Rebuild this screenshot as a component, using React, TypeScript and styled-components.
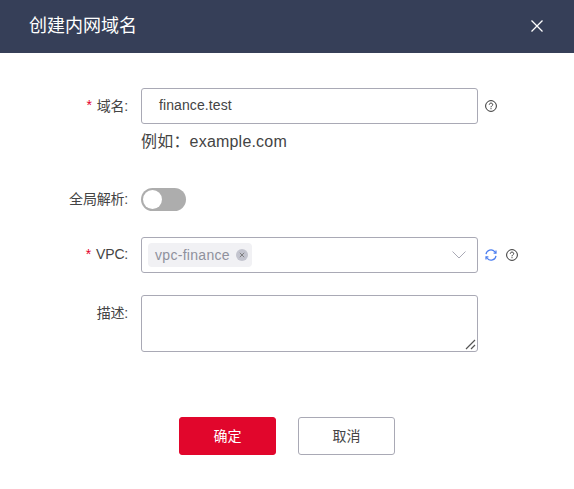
import React from "react";
import styled, { createGlobalStyle } from "styled-components";

const Global = createGlobalStyle`
  html, body { margin: 0; padding: 0; background: #fff; }
  body { font-family: "Liberation Sans", "Noto Sans CJK SC", sans-serif; color: #3f3f3f; }
  * { box-sizing: border-box; }
`;

const Dialog = styled.div`
  width: 574px;
  height: 489px;
  display: flex;
  flex-direction: column;
  overflow: hidden;
`;
const Header = styled.header`
  height: 53px;
  flex: none;
  background: #363f58;
  display: flex;
  align-items: center;
  justify-content: space-between;
  padding: 0 30px 1px 29px;
  color: #fff;
`;
const Title = styled.h1`
  margin: 0;
  font-size: 18px;
  font-weight: 400;
  line-height: 24px;
`;
const CloseButton = styled.button`
  width: 14px;
  height: 14px;
  padding: 0;
  border: 0;
  background: none;
  display: block;
  color: #fff;
`;
const Form = styled.form`
  display: flex;
  flex-direction: column;
  padding: 35px 0 0;
`;
const Row = styled.div<{ $mb: number }>`
  display: grid;
  grid-template-columns: 128px 337px auto;
  column-gap: 13px;
  margin-bottom: ${(p) => p.$mb}px;
`;
const Label = styled.label<{ $h: number }>`
  height: ${(p) => p.$h}px;
  display: flex;
  align-items: center;
  justify-content: flex-end;
  padding-bottom: 2px;
  font-size: 14px;
  letter-spacing: -0.2px;
  color: #444;
`;
const Required = styled.span`
  color: #e4002b;
  margin-right: 5px;
`;
const Field = styled.div`
  display: flex;
  flex-direction: column;
`;
const Input = styled.div`
  height: 36px;
  border: 1px solid #a9a9b5;
  border-radius: 3px;
  padding: 0 17px 2px;
  display: flex;
  align-items: center;
  font-size: 14px;
  letter-spacing: 0.1px;
  color: #444;
`;
const Hint = styled.div`
  font-size: 16px;
  line-height: 22px;
  margin-top: 7px;
  letter-spacing: 0.2px;
  color: #444;
`;
const Switch = styled.div`
  width: 45px;
  height: 23px;
  border-radius: 12px;
  background: #adadad;
  padding: 2px;
`;
const Knob = styled.div`
  width: 19px;
  height: 19px;
  border-radius: 50%;
  background: #fff;
`;
const Select = styled.div`
  height: 36px;
  border: 1px solid #a9a9b5;
  border-radius: 3px;
  padding: 0 11px 0 6px;
  display: flex;
  align-items: center;
  justify-content: space-between;
`;
const Tag = styled.span`
  height: 24px;
  padding: 0 4px 0 7px;
  background: #f1f1f4;
  border-radius: 4px;
  display: inline-flex;
  align-items: center;
  gap: 6px;
  font-size: 14px;
  letter-spacing: 0.3px;
  color: #8f909c;
`;
const TagClose = styled.span`
  width: 12px;
  height: 12px;
  border-radius: 50%;
  background: #c3c4ce;
  display: flex;
  align-items: center;
  justify-content: center;
  color: #777;
`;
const Textarea = styled.div`
  height: 57px;
  border: 1px solid #a9a9b5;
  border-radius: 3px;
  position: relative;
`;
const Grip = styled.svg`
  position: absolute;
  right: 1px;
  bottom: 1px;
`;
const Extras = styled.div<{ $gap?: number }>`
  height: 36px;
  display: flex;
  align-items: center;
  gap: ${(p) => p.$gap ?? 0}px;
  margin-left: -6px;
`;
const Footer = styled.div`
  display: flex;
  justify-content: center;
  gap: 22px;
  margin-top: 65px;
`;
const Button = styled.button<{ $primary?: boolean }>`
  width: 97px;
  height: 38px;
  padding: 0 0 2px;
  border-radius: 3px;
  font: 14px "Liberation Sans", "Noto Sans CJK SC", sans-serif;
  border: 1px solid ${(p) => (p.$primary ? "#e1062c" : "#a9a9b5")};
  background: ${(p) => (p.$primary ? "#e1062c" : "#fff")};
  color: ${(p) => (p.$primary ? "#fff" : "#444")};
`;

const Help = () => (
  <svg width="12" height="12" viewBox="0 0 12 12" fill="none" stroke="#333" strokeWidth="1">
    <circle cx="6" cy="6" r="5.4" />
    <path d="M4.3 4.700c0-1 .8-1.600 1.700-1.600s1.700.6 1.700 1.500c0 1.200-1.700 1.300-1.700 2.700" />
    <path d="M6 8.200v1" />
  </svg>
);

export default function App() {
  return (
    <>
      <Global />
      <Dialog>
        <Header>
          <Title>创建内网域名</Title>
          <CloseButton type="button" aria-label="关闭">
            <svg width="14" height="14" viewBox="0 0 14 14" stroke="currentColor" strokeWidth="1.3" fill="none">
              <path d="M1.500 1.500l11 11M12.500 1.500l-11 11" />
            </svg>
          </CloseButton>
        </Header>
        <Form>
          <Row $mb={35}>
            <Label $h={36}><Required>*</Required>域名:</Label>
            <Field>
              <Input>finance.test</Input>
              <Hint>{"例如\uFF1Aexample.com"}</Hint>
            </Field>
            <Extras><Help /></Extras>
          </Row>
          <Row $mb={26}>
            <Label $h={22}>全局解析:</Label>
            <Switch><Knob /></Switch>
          </Row>
          <Row $mb={22}>
            <Label $h={36}><Required>*</Required>VPC:</Label>
            <Select>
              <Tag>
                vpc-finance
                <TagClose>
                  <svg width="6" height="6" viewBox="0 0 6 6" stroke="currentColor" strokeWidth="0.9" fill="none">
                    <path d="M.8.8l4.400 4.400M5.200.8L.8 5.200" />
                  </svg>
                </TagClose>
              </Tag>
              <svg width="14" height="8" viewBox="0 0 14 8" stroke="#a9a9b5" strokeWidth="1" fill="none">
                <path d="M.5.500L7 7l6.500-6.500" />
              </svg>
            </Select>
            <Extras $gap={9}>
              <svg width="12" height="12" viewBox="0 0 12 12" stroke="#4a7df0" strokeWidth="1.200" fill="none">
                <path d="M1 5.200A5 5 0 0 1 9.700 2.600L10.800 4" />
                <path d="M11 6.800A5 5 0 0 1 2.300 9.400L1.200 8" />
                <path d="M11 1.500V4.200H8.600M1 10.500V7.800h2.400" />
              </svg>
              <Help />
            </Extras>
          </Row>
          <Row $mb={0}>
            <Label $h={36}>描述:</Label>
            <Textarea>
              <Grip width="11" height="11" viewBox="0 0 11 11" stroke="#555" strokeWidth="1.200" fill="none">
                <path d="M1 10L10 1M6 10l4-4" />
              </Grip>
            </Textarea>
          </Row>
          <Footer>
            <Button type="button" $primary>确定</Button>
            <Button type="button">取消</Button>
          </Footer>
        </Form>
      </Dialog>
    </>
  );
}
